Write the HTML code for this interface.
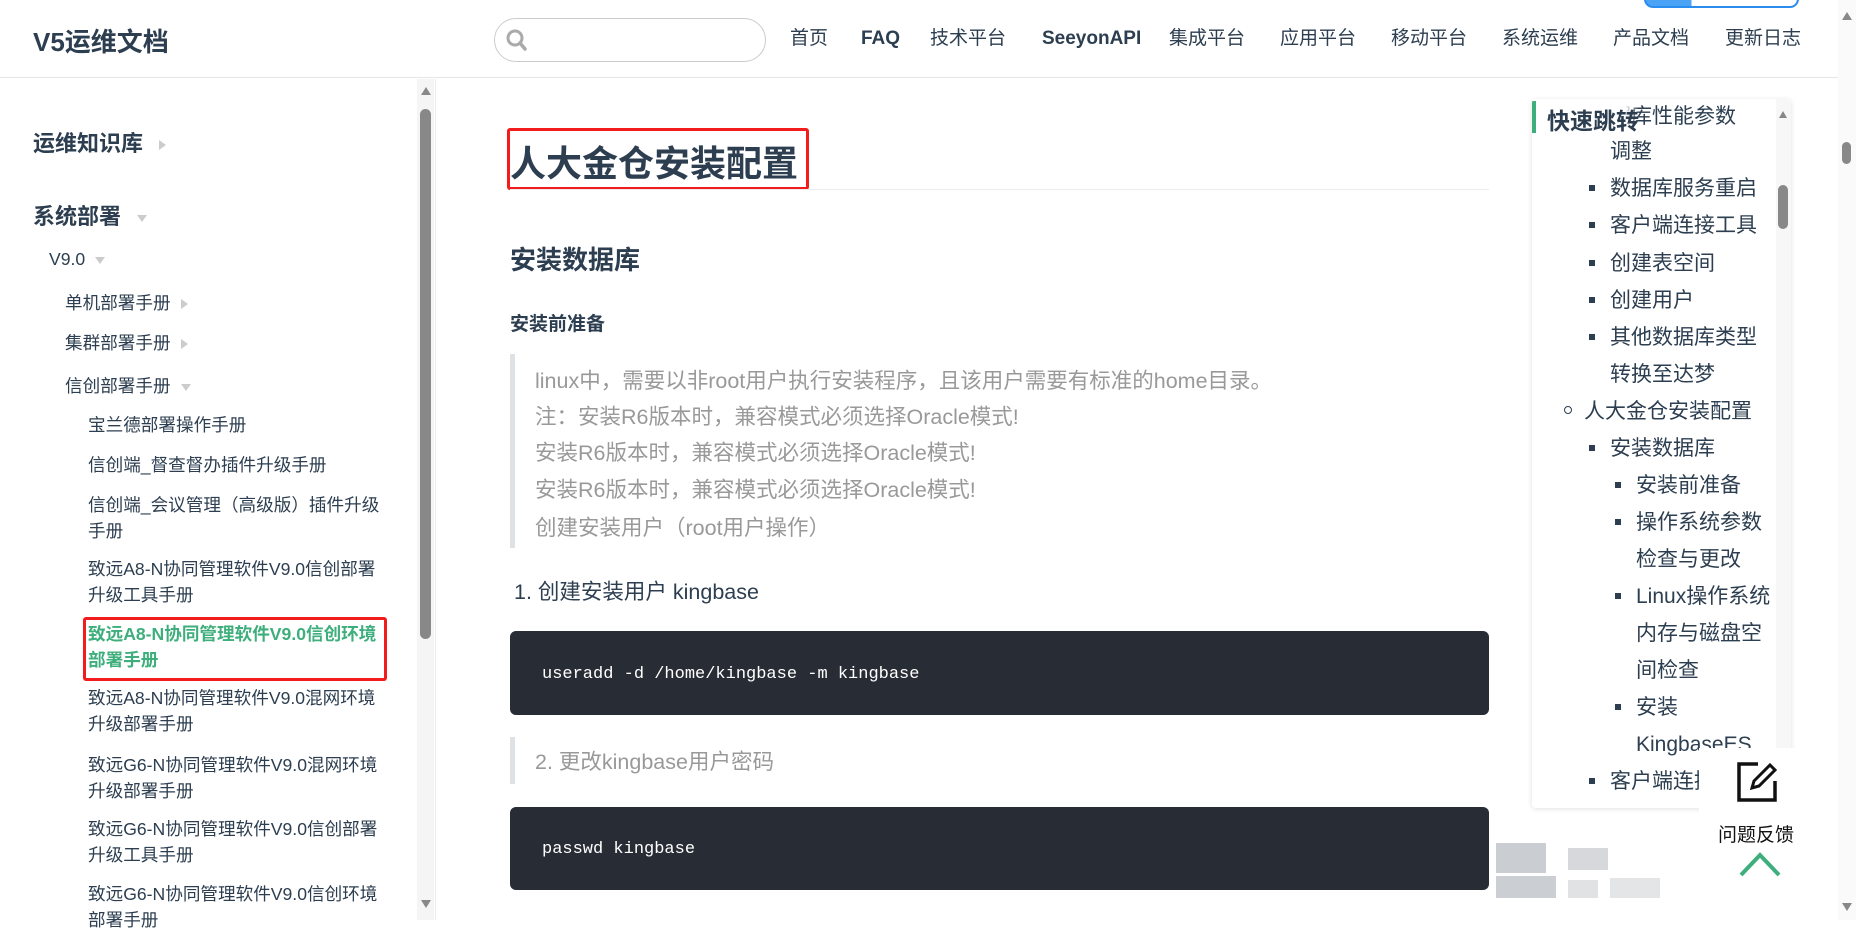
<!DOCTYPE html>
<html><head><meta charset="utf-8">
<style>
*{margin:0;padding:0;box-sizing:border-box}
body{width:1856px;height:920px;overflow:hidden;background:#fff;font-family:"Liberation Sans","Noto Sans CJK SC",sans-serif;color:#2c3e50;position:relative}
.a{position:absolute;white-space:nowrap}
.nav{top:26px;font-size:19px;line-height:26px;color:#2c3e50}
.sb{font-size:17.6px;line-height:26px;color:#2c3e50}
.tri{display:inline-block;width:0;height:0;margin-left:10px;vertical-align:middle}
.tr{border-top:5px solid transparent;border-bottom:5px solid transparent;border-left:7px solid #ccc}
.td{border-left:5px solid transparent;border-right:5px solid transparent;border-top:7px solid #ccc}
.bq{color:#999;font-size:21.5px;line-height:28px}
.code{position:absolute;left:510px;width:979px;background:#282c34;border-radius:6px;color:#fff;font-family:"Liberation Mono",monospace;font-size:17px}
.toc{font-size:21px;line-height:26px;color:#2c3e50}
.sq{position:absolute;width:6px;height:6px;background:#2c3e50}
</style></head><body>
<!-- header -->
<div class="a" style="left:0;top:0;width:1838px;height:78px;border-bottom:1px solid #e6e6e6"></div>
<div class="a" style="left:33px;top:22px;font-size:26px;font-weight:bold">V5运维文档</div>
<div class="a" style="left:494px;top:18px;width:272px;height:44px;border:1px solid #ccc;border-radius:22px"></div>
<svg class="a" style="left:505px;top:28px" width="24" height="24" viewBox="0 0 24 24"><circle cx="10" cy="10" r="7" fill="none" stroke="#aaa" stroke-width="3"/><line x1="15" y1="15" x2="20" y2="21" stroke="#aaa" stroke-width="3.5" stroke-linecap="round"/></svg>
<div class="a nav" style="left:790px">首页</div>
<div class="a nav" style="left:861px;font-weight:bold">FAQ</div>
<div class="a nav" style="left:930px">技术平台</div>
<div class="a nav" style="left:1042px;font-weight:bold">SeeyonAPI</div>
<div class="a nav" style="left:1169px">集成平台</div>
<div class="a nav" style="left:1280px">应用平台</div>
<div class="a nav" style="left:1391px">移动平台</div>
<div class="a nav" style="left:1502px">系统运维</div>
<div class="a nav" style="left:1613px">产品文档</div>
<div class="a nav" style="left:1725px">更新日志</div>
<div class="a" style="left:1644px;top:-10px;width:155px;height:18px;border-radius:9px;border:2px solid #2b8cf0;background:linear-gradient(90deg,#4aa3f5 30%,#fff 30%)"></div>
<!-- page scrollbar -->
<div class="a" style="left:1838px;top:0;width:18px;height:920px;background:#fafafa"></div>
<div class="a" style="left:1842px;top:12px;border-left:5px solid transparent;border-right:5px solid transparent;border-bottom:8px solid #888"></div>
<div class="a" style="left:1842px;top:142px;width:9px;height:22px;background:#888;border-radius:5px"></div>
<div class="a" style="left:1842px;top:903px;border-left:5px solid transparent;border-right:5px solid transparent;border-top:8px solid #888"></div>
<!-- sidebar -->
<div class="a" style="left:435px;top:79px;width:1px;height:841px;background:#eaecef"></div>
<div class="a" style="left:417px;top:79px;width:17px;height:841px;background:#f5f5f5"></div>
<div class="a" style="left:421px;top:87px;border-left:5px solid transparent;border-right:5px solid transparent;border-bottom:8px solid #888"></div>
<div class="a" style="left:420px;top:109px;width:11px;height:530px;background:#888;border-radius:6px"></div>
<div class="a" style="left:421px;top:900px;border-left:5px solid transparent;border-right:5px solid transparent;border-top:8px solid #888"></div>
<div class="a" style="left:33px;top:126px;font-size:22px;font-weight:bold">运维知识库<span class="tri tr" style="margin-left:16px"></span></div>
<div class="a" style="left:33px;top:199px;font-size:22px;font-weight:bold">系统部署<span class="tri td" style="margin-left:16px"></span></div>
<div class="a sb" style="left:49px;top:246px">V9.0<span class="tri td"></span></div>
<div class="a sb" style="left:65px;top:290px">单机部署手册<span class="tri tr"></span></div>
<div class="a sb" style="left:65px;top:330px">集群部署手册<span class="tri tr"></span></div>
<div class="a sb" style="left:65px;top:373px">信创部署手册<span class="tri td"></span></div>
<div class="a sb" style="left:88px;top:412px">宝兰德部署操作手册</div>
<div class="a sb" style="left:88px;top:452px">信创端_督查督办插件升级手册</div>
<div class="a sb" style="left:88px;top:492px">信创端_会议管理（高级版）插件升级<br>手册</div>
<div class="a sb" style="left:88px;top:556px">致远A8-N协同管理软件V9.0信创部署<br>升级工具手册</div>
<div class="a" style="left:83px;top:617px;width:304px;height:64px;border:3px solid #f21c1c;border-radius:3px"></div>
<div class="a sb" style="left:88px;top:621px;color:#3eaf7c;font-weight:bold">致远A8-N协同管理软件V9.0信创环境<br>部署手册</div>
<div class="a sb" style="left:88px;top:685px">致远A8-N协同管理软件V9.0混网环境<br>升级部署手册</div>
<div class="a sb" style="left:88px;top:752px">致远G6-N协同管理软件V9.0混网环境<br>升级部署手册</div>
<div class="a sb" style="left:88px;top:816px">致远G6-N协同管理软件V9.0信创部署<br>升级工具手册</div>
<div class="a sb" style="left:88px;top:881px">致远G6-N协同管理软件V9.0信创环境<br>部署手册</div>
<!-- content -->
<div class="a" style="left:510px;top:135px;font-size:36px;font-weight:bold">人大金仓安装配置</div>
<div class="a" style="left:507px;top:128px;width:302px;height:62px;border:3px solid #f21c1c;border-radius:3px"></div>
<div class="a" style="left:510px;top:189px;width:979px;height:1px;background:#eaecef"></div>
<div class="a" style="left:510px;top:240px;font-size:26px;font-weight:bold">安装数据库</div>
<div class="a" style="left:510px;top:309px;font-size:19px;font-weight:bold">安装前准备</div>
<div class="a" style="left:510px;top:354px;width:5px;height:194px;background:#dfe2e5"></div>
<div class="a bq" style="left:535px;top:367px">linux中，需要以非root用户执行安装程序，且该用户需要有标准的home目录。</div>
<div class="a bq" style="left:535px;top:403px">注：安装R6版本时，兼容模式必须选择Oracle模式!</div>
<div class="a bq" style="left:535px;top:439px">安装R6版本时，兼容模式必须选择Oracle模式!</div>
<div class="a bq" style="left:535px;top:476px">安装R6版本时，兼容模式必须选择Oracle模式!</div>
<div class="a bq" style="left:535px;top:514px">创建安装用户（root用户操作）</div>
<div class="a" style="left:514px;top:578px;font-size:21.5px;line-height:28px;color:#2c3e50">1. 创建安装用户 kingbase</div>
<div class="code" style="top:631px;height:84px;padding:34px 0 0 32px">useradd -d /home/kingbase -m kingbase</div>
<div class="a" style="left:510px;top:737px;width:5px;height:47px;background:#dfe2e5"></div>
<div class="a bq" style="left:535px;top:748px">2. 更改kingbase用户密码</div>
<div class="code" style="top:807px;height:83px;padding:33px 0 0 32px">passwd kingbase</div>
<!-- TOC -->
<div class="a" style="left:1532px;top:99px;width:259px;height:709px;background:#fff;box-shadow:0 1px 6px rgba(0,0,0,.12);border-radius:4px;overflow:hidden">
<div class="a" style="left:0;top:2px;width:4px;height:32px;background:#3eaf7c"></div>
<div class="a" style="left:244px;top:0;width:15px;height:709px;background:#f7f7f7"></div>
<div class="a" style="left:247px;top:12px;border-left:4px solid transparent;border-right:4px solid transparent;border-bottom:7px solid #888"></div>
<div class="a" style="left:246px;top:86px;width:10px;height:44px;background:#888;border-radius:5px"></div>
<div class="a toc" style="left:78px;top:5px">据库性能参数</div>
<div class="a" style="left:15px;top:3px;font-size:23px;font-weight:bold;color:#2c3e50;background:linear-gradient(90deg,#fff 85%,transparent)">快速跳转</div>
<div class="a toc" style="left:78px;top:40px">调整</div>
<div class="sq" style="left:57px;top:86px"></div><div class="a toc" style="left:78px;top:77px">数据库服务重启</div>
<div class="sq" style="left:57px;top:123px"></div><div class="a toc" style="left:78px;top:114px">客户端连接工具</div>
<div class="sq" style="left:57px;top:161px"></div><div class="a toc" style="left:78px;top:152px">创建表空间</div>
<div class="sq" style="left:57px;top:198px"></div><div class="a toc" style="left:78px;top:189px">创建用户</div>
<div class="sq" style="left:57px;top:235px"></div><div class="a toc" style="left:78px;top:226px">其他数据库类型</div>
<div class="a toc" style="left:78px;top:263px">转换至达梦</div>
<div class="a" style="left:32px;top:307px;width:8px;height:8px;border:1px solid #2c3e50;border-radius:50%"></div><div class="a toc" style="left:52px;top:300px">人大金仓安装配置</div>
<div class="sq" style="left:57px;top:346px"></div><div class="a toc" style="left:78px;top:337px">安装数据库</div>
<div class="sq" style="left:83px;top:383px"></div><div class="a toc" style="left:104px;top:374px">安装前准备</div>
<div class="sq" style="left:83px;top:420px"></div><div class="a toc" style="left:104px;top:411px">操作系统参数</div>
<div class="a toc" style="left:104px;top:448px">检查与更改</div>
<div class="sq" style="left:83px;top:494px"></div><div class="a toc" style="left:104px;top:485px">Linux操作系统</div>
<div class="a toc" style="left:104px;top:522px">内存与磁盘空</div>
<div class="a toc" style="left:104px;top:559px">间检查</div>
<div class="sq" style="left:83px;top:605px"></div><div class="a toc" style="left:104px;top:596px">安装</div>
<div class="a toc" style="left:104px;top:633px">KingbaseES</div>
<div class="sq" style="left:57px;top:679px"></div><div class="a toc" style="left:78px;top:670px">客户端连接工具</div>
</div>
<!-- blurred -->
<div class="a" style="left:1496px;top:843px;width:50px;height:30px;background:#b4b8be;opacity:.7"></div>
<div class="a" style="left:1496px;top:876px;width:60px;height:22px;background:#a8adb4;opacity:.6"></div>
<div class="a" style="left:1568px;top:848px;width:40px;height:22px;background:#d6d8db"></div>
<div class="a" style="left:1568px;top:880px;width:30px;height:18px;background:#e0e2e4"></div>
<div class="a" style="left:1610px;top:878px;width:50px;height:20px;background:#e4e5e7"></div>
<!-- feedback -->
<div class="a" style="left:1699px;top:748px;width:118px;height:172px;background:#fff"></div>
<svg class="a" style="left:1736px;top:761px" width="42" height="42" viewBox="0 0 42 42"><path d="M22 3H3v36h36V20" fill="none" stroke="#111" stroke-width="3.5"/><path d="M34 4l5 5-16 16-7 2 2-7z" fill="none" stroke="#111" stroke-width="3"/></svg>
<div class="a" style="left:1718px;top:820px;font-size:19px;color:#111">问题反馈</div>
<svg class="a" style="left:1738px;top:850px" width="44" height="28" viewBox="0 0 44 28"><path d="M3 25L22 5l19 20" fill="none" stroke="#3eaf7c" stroke-width="4"/></svg>
</body></html>
